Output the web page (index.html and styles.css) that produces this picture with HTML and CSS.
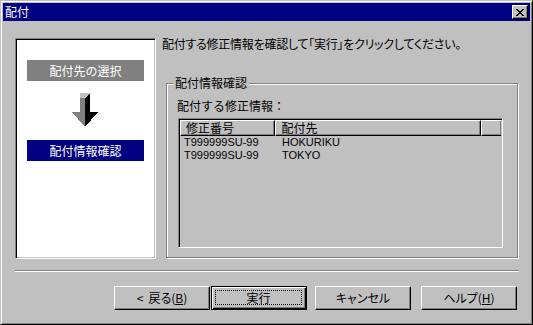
FILE: index.html
```html
<!DOCTYPE html>
<html lang="ja">
<head>
<meta charset="utf-8">
<title>配付</title>
<link rel="stylesheet" href="styles.css">
</head>
<body>
<div class="window">
  <div class="titlebar">
    <span class="title">配付</span>
    <button class="close" aria-label="閉じる">
      <svg width="8" height="7" viewBox="0 0 8 7" shape-rendering="crispEdges"><path fill="#000" d="M0 0h2v1H0zM6 0h2v1H6zM1 1h2v1H1zM5 1h2v1H5zM2 2h4v1H2zM3 3h2v1H3zM2 4h4v1H2zM1 5h2v1H1zM5 5h2v1H5zM0 6h2v1H0zM6 6h2v1H6z"/></svg>
    </button>
  </div>
  <div class="body">
    <div class="main">
      <div class="steps">
        <div class="step done">配付先の選択</div>
        <svg class="arrow" width="26" height="34" viewBox="0 0 26 34" shape-rendering="crispEdges">
          <rect x="8" y="0" width="5" height="20" fill="#808080"/>
          <rect x="13" y="0" width="5" height="20" fill="#000"/>
          <polygon points="8,0 18,0 13,5 8,5" fill="#c0c0c0"/>
          <polygon points="0,19 13,19 13,34" fill="#808080"/>
          <polygon points="13,19 26,19 13,34" fill="#000"/>
        </svg>
        <div class="step current">配付情報確認</div>
      </div>
      <div class="right">
        <p class="instr">配付する修正情報を確認して「実行」をクリックしてください。</p>
        <div class="group">
          <span class="legend">配付情報確認</span>
          <div class="label">配付する修正情報：</div>
          <div class="list">
            <div class="header">
              <div class="hcell c1">修正番号</div>
              <div class="hcell c2">配付先</div>
              <div class="hcell c3"></div>
            </div>
            <div class="row"><span class="c1">T999999SU-99</span><span class="c2">HOKURIKU</span></div>
            <div class="row"><span class="c1">T999999SU-99</span><span class="c2">TOKYO</span></div>
          </div>
        </div>
      </div>
    </div>
    <div class="sep"></div>
    <div class="buttons">
      <button class="btn b-back"><span class="lt">&lt;</span>戻る(<u>B</u>)</button>
      <button class="btn default b-exec"><span class="focus">実行</span></button>
      <button class="btn b-cancel">キャンセル</button>
      <button class="btn b-help">ヘルプ(<u>H</u>)</button>
    </div>
  </div>
</div>
</body>
</html>
```
FILE: styles.css
```css
* { box-sizing: border-box; }
html, body {
  margin: 0;
  padding: 0;
  background: #c0c0c0;
}
body {
  font-family: "Noto Sans CJK JP", sans-serif;
  font-size: 12px;
  line-height: 14px;
  color: #000;
  font-feature-settings: "palt";
}
.window {
  width: 533px;
  height: 325px;
  background: #c0c0c0;
  border: 1px solid;
  border-color: #c0c0c0 #000 #000 #c0c0c0;
  box-shadow: inset 1px 1px 0 #fff, inset -1px -1px 0 #808080;
  padding: 2px;
  display: flex;
  flex-direction: column;
}
.titlebar {
  height: 18px;
  background: #000080;
  color: #fff;
  display: flex;
  align-items: center;
  justify-content: space-between;
  padding-left: 2px;
  padding-right: 2px;
}
.title { font-size: 12px; line-height: 14px; }
.close {
  width: 16px;
  height: 14px;
  padding: 0;
  margin: 0;
  background: #c0c0c0;
  border: 1px solid;
  border-color: #fff #000 #000 #fff;
  box-shadow: inset -1px -1px 0 #808080;
  display: flex;
  align-items: center;
  justify-content: center;
}
.close svg { display: block; }
.body {
  padding: 17px 12px 0 12px;
  display: flex;
  flex-direction: column;
}
.main {
  display: flex;
  height: 221px;
}
.steps {
  width: 142px;
  height: 221px;
  background: #fff;
  border: 1px solid;
  border-color: #808080 #fff #fff #808080;
  box-shadow: inset 1px 1px 0 #000, inset -1px -1px 0 #c0c0c0;
  padding: 21px 0 0 11px;
  display: flex;
  flex-direction: column;
}
.step {
  width: 117px;
  height: 21px;
  color: #fff;
  display: flex;
  align-items: center;
  justify-content: center;
  font-feature-settings: normal;
}
.step.done { background: #808080; }
.step.current { background: #000080; }
.arrow {
  display: block;
  margin: 12px 0 13px 45px;
}
.right {
  margin-left: 6px;
  display: flex;
  flex-direction: column;
}
.instr {
  margin: -1px 0 0 0;
  white-space: nowrap;
  letter-spacing: -0.25px;
}
.group {
  position: relative;
  margin: 32px 0 0 4px;
  width: 352px;
  height: 175px;
  border: 1px solid #808080;
  box-shadow: 1px 1px 0 #fff, inset 1px 1px 0 #fff;
  padding: 15px 0 0 10px;
}
.legend {
  position: absolute;
  top: -8px;
  left: 6px;
  padding: 0 2px;
  background: #c0c0c0;
  font-feature-settings: normal;
}
.label {
  font-feature-settings: normal;
}
.list {
  margin: 5px 0 0 1px;
  width: 325px;
  height: 130px;
  border: 1px solid;
  border-color: #808080 #fff #fff #808080;
  box-shadow: inset 1px 1px 0 #000, inset -1px -1px 0 #c0c0c0;
  padding: 1px;
  overflow: hidden;
}
.header {
  display: flex;
  height: 16px;
}
.hcell {
  height: 16px;
  border: 1px solid;
  border-color: #fff #000 #000 #fff;
  box-shadow: inset -1px -1px 0 #808080;
  padding-left: 5px;
  line-height: 14px;
  white-space: nowrap;
  font-feature-settings: normal;
}
.hcell.c1 { width: 96px; }
.hcell.c2 { width: 207px; }
.hcell.c3 { width: 20px; flex: none; border-right: none; }
.row {
  display: flex;
  height: 13px;
  line-height: 13px;
  font-family: "Liberation Sans", Arial, sans-serif;
  font-size: 11px;
  white-space: nowrap;
}
.row .c1 { width: 96px; padding-left: 4px; }
.row .c2 { padding-left: 6px; }
.sep {
  margin-top: 11px;
  width: 504px;
  height: 2px;
  border-top: 1px solid #808080;
  border-bottom: 1px solid #fff;
}
.buttons {
  display: flex;
  margin-top: 14px;
  padding-left: 99px;
}
.btn {
  width: 96px;
  height: 24px;
  margin: 0;
  padding: 0;
  background: #c0c0c0;
  font: inherit;
  color: #000;
  border: 1px solid;
  border-color: #fff #000 #000 #fff;
  box-shadow: inset -1px -1px 0 #808080;
  display: flex;
  align-items: center;
  justify-content: center;
  white-space: nowrap;
}
.btn .lt { margin-right: 5px; }
.btn u { text-underline-offset: 1px; }
.btn.default {
  border: 1px solid #000;
  box-shadow: inset 1px 1px 0 #fff, inset -1px -1px 0 #000, inset -2px -2px 0 #808080;
  padding: 3px 4px 4px 3px;
}
.focus {
  flex: 1;
  align-self: stretch;
  border: 1px dotted #000;
  display: flex;
  align-items: center;
  justify-content: center;
}
.b-exec { margin-left: 1px; }
.b-cancel { margin-left: 8px; }
.b-help { margin-left: 10px; }
```
